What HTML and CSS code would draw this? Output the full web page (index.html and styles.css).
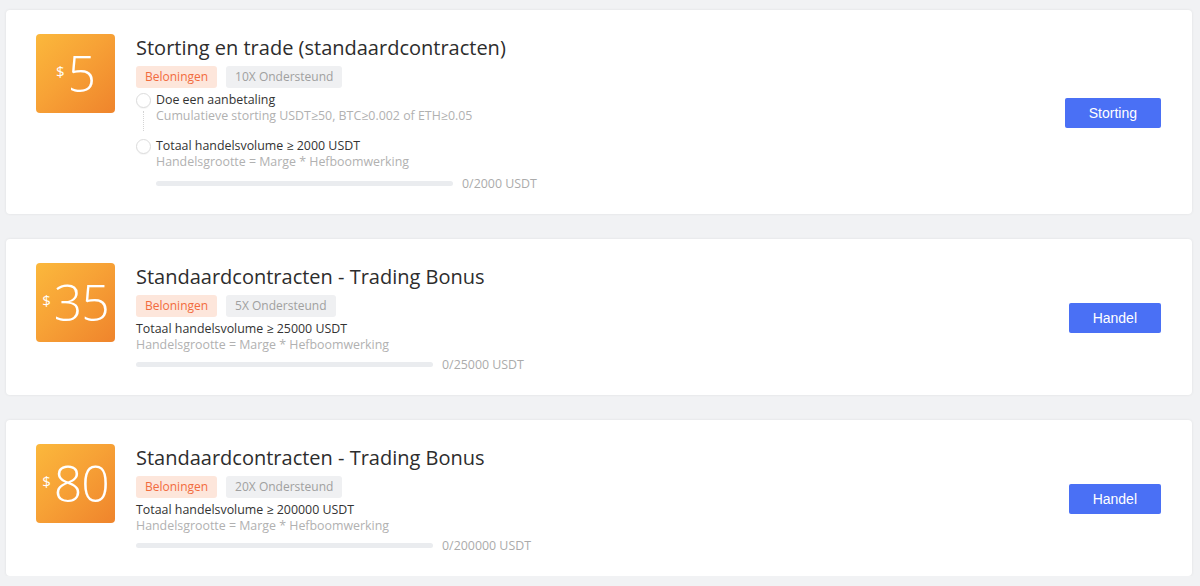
FILE: index.html
```html
<!DOCTYPE html>
<html lang="nl">
<head>
<meta charset="utf-8">
<title>Taken</title>
<link rel="stylesheet" href="styles.css">
</head>
<body>
<div class="page">
  <div class="card">
    <div class="badge"><span class="cur">$</span><span class="amt">5</span></div>
    <div class="info">
      <div class="title">Storting en trade (standaardcontracten)</div>
      <div class="tags"><span class="tag tag-reward">Beloningen</span><span class="tag tag-grey">10X Ondersteund</span></div>
      <div class="step">
        <div class="rail"><span class="dot"></span><span class="line"></span></div>
        <div class="step-body gap">
          <div class="main-text">Doe een aanbetaling</div>
          <div class="sub-text">Cumulatieve storting USDT≥50, BTC≥0.002 of ETH≥0.05</div>
        </div>
      </div>
      <div class="step">
        <div class="rail"><span class="dot"></span></div>
        <div class="step-body">
          <div class="main-text">Totaal handelsvolume ≥ 2000 USDT</div>
          <div class="sub-text">Handelsgrootte = Marge * Hefboomwerking</div>
          <div class="progress step-progress"><span class="bar"></span><span class="prog-text">0/2000 USDT</span></div>
        </div>
      </div>
    </div>
    <button class="btn">Storting</button>
  </div>

  <div class="card">
    <div class="badge"><span class="cur">$</span><span class="amt">35</span></div>
    <div class="info">
      <div class="title">Standaardcontracten - Trading Bonus</div>
      <div class="tags"><span class="tag tag-reward">Beloningen</span><span class="tag tag-grey">5X Ondersteund</span></div>
      <div class="main-text">Totaal handelsvolume ≥ 25000 USDT</div>
      <div class="sub-text">Handelsgrootte = Marge * Hefboomwerking</div>
      <div class="progress"><span class="bar"></span><span class="prog-text">0/25000 USDT</span></div>
    </div>
    <button class="btn">Handel</button>
  </div>

  <div class="card">
    <div class="badge"><span class="cur">$</span><span class="amt">80</span></div>
    <div class="info">
      <div class="title">Standaardcontracten - Trading Bonus</div>
      <div class="tags"><span class="tag tag-reward">Beloningen</span><span class="tag tag-grey">20X Ondersteund</span></div>
      <div class="main-text">Totaal handelsvolume ≥ 200000 USDT</div>
      <div class="sub-text">Handelsgrootte = Marge * Hefboomwerking</div>
      <div class="progress"><span class="bar"></span><span class="prog-text">0/200000 USDT</span></div>
    </div>
    <button class="btn">Handel</button>
  </div>
</div>
</body>
</html>
```

FILE: styles.css
```css
* { box-sizing: border-box; }
html, body { margin: 0; padding: 0; }
body {
  background: #f1f2f4;
  font-family: "Open Sans", "Noto Sans", sans-serif;
  color: #333;
}
.page {
  padding: 10px 8px 0 6px;
  display: flex;
  flex-direction: column;
  gap: 25px;
}
.card {
  background: #fff;
  border-radius: 4px;
  box-shadow: 0 0 3px rgba(0, 0, 0, 0.08);
  display: flex;
  align-items: center;
  padding: 24px 31px 23px 30px;
}
.badge {
  align-self: flex-start;
  width: 79px;
  height: 79px;
  border-radius: 4px;
  background: linear-gradient(135deg, #fbb83c 0%, #f7a236 45%, #ef842c 100%);
  color: #fff;
  display: flex;
  align-items: center;
  justify-content: center;
  padding-bottom: 2px;
}
.cur {
  font-size: 15px;
  margin-right: 3px;
  margin-top: -3px;
}
.amt {
  font-size: 50px;
  font-weight: 300;
  line-height: 1;
  letter-spacing: -1px;
}
.info {
  flex: 1;
  margin-left: 21px;
  display: flex;
  flex-direction: column;
}
.title {
  font-size: 20px;
  line-height: 28px;
  color: #2d2d2d;
}
.tags {
  display: flex;
  gap: 9px;
  margin-top: 4px;
  margin-bottom: 4px;
}
.tag {
  height: 22px;
  line-height: 22px;
  font-size: 12px;
  padding: 0 9px;
  border-radius: 3px;
}
.tag-reward { background: #fde6db; color: #f26b3d; }
.tag-grey { background: #eff0f2; color: #a0a0a0; }
.main-text {
  font-size: 12.4px;
  line-height: 16px;
  color: #333;
}
.sub-text {
  font-size: 12.4px;
  line-height: 16px;
  color: #b1b1b1;
}
.step {
  display: flex;
  gap: 5px;
}
.rail {
  width: 15px;
  display: flex;
  flex-direction: column;
  align-items: center;
  padding-top: 1px;
}
.dot {
  width: 15px;
  height: 15px;
  border-radius: 50%;
  border: 1px solid #dcdcdc;
  background: #fff;
  box-shadow: 0 1px 1px rgba(0, 0, 0, 0.04);
  flex: none;
}
.line {
  flex: 1;
  width: 0;
  border-left: 1px dotted #d4d4d4;
  margin: 3px 0 7px;
}
.step-body { display: flex; flex-direction: column; }
.step-body.gap { padding-bottom: 14px; }
.progress {
  display: flex;
  align-items: center;
  gap: 9px;
  height: 16px;
  margin-top: 3px;
}
.step-progress { margin-top: 5px; }
.bar {
  width: 297px;
  height: 5px;
  border-radius: 3px;
  background: #eaecef;
}
.prog-text {
  font-size: 12.4px;
  color: #ababab;
}
.btn {
  height: 30px;
  padding: 0 24px;
  border: none;
  border-radius: 2px;
  background: #4a70f5;
  color: #fff;
  font-family: "Liberation Sans", Arial, sans-serif;
  font-size: 14px;
  cursor: pointer;
}
```
